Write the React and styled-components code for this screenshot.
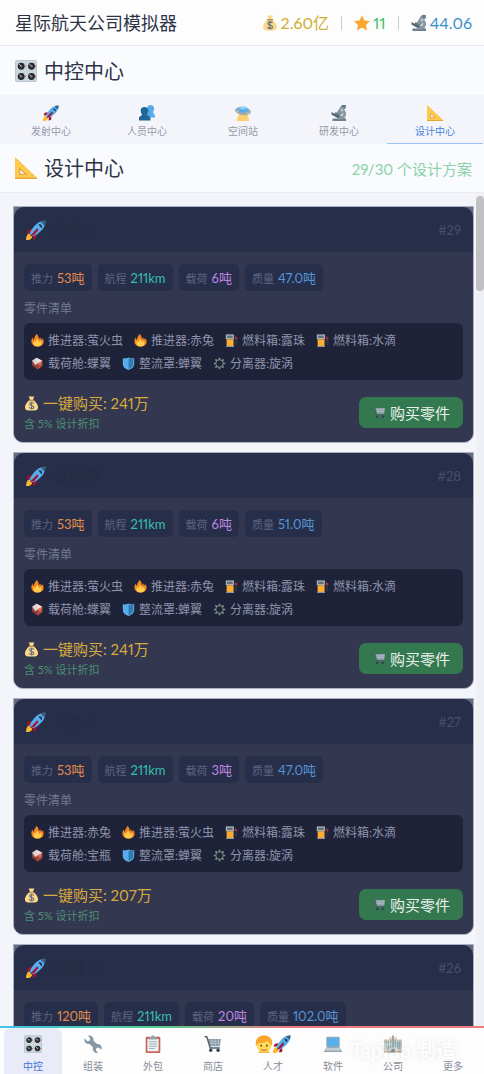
import React, { useState } from "react"
import styled, { createGlobalStyle } from "styled-components"


const GlobalStyle = createGlobalStyle`
  * {
    box-sizing: border-box;
  }
  body {
    margin: 0;
    background: #f4f5fa;
    color: #2e3445;
    font-family: Lato, "Noto Sans CJK SC", sans-serif;
    font-variant-numeric: proportional-nums;
  }
  h1, h2, h3, p, ul {
    margin: 0;
    padding: 0;
    font-weight: 400;
  }
  button {
    border: 0;
    margin: 0;
    padding: 0;
    background: none;
    font: inherit;
    cursor: pointer;
  }
`;

const Svg = styled.svg`
  display: block;
  flex: none;
  width: ${({ $size }) => $size}px;
  height: ${({ $size }) => $size}px;
`;

const drawings = {
  rocket: (
    <>
      <path d="M9 14 3 16 1 21l7-1zM17 24l-1 6-5 1 1-8z" fill="#a5122b" />
      <path d="M5 21c-4 2-5 7-5 11 4 0 8 0 10-5z" fill="#fdb62f" />
      <path d="M31 1c-8 0-13 3-18 9-4 5-6 8-7 12l4 4c4-1 8-3 12-7 6-5 9-10 9-18z" fill="#55acee" />
      <path d="M31 1c-3 0-6 .5-8 1.500l6.500 6.500C31 6 31 4 31 1z" fill="#3c5f83" />
      <path d="M20 7c4-1 7 2 5 6l-3-3z" fill="#20303f" />
      <path d="M18 13 6 26l7-2 7-8z" fill="#a5122b" />
    </>
  ),
  bag: (
    <>
      <path d="M10 1h12l-3 7c6 4 11 10 11 16 0 5-4 7-7 7H9c-4 0-7-2-7-7C2 18 7 12 13 8z" fill="#fdd888" />
      <path d="M10 8h12v3H10z" fill="#bf8f52" />
      <path d="M21 16c-2-3-9-3-9 1 0 5 9 2 9 7 0 4-8 4-10 0M16 12v17" fill="none" stroke="#67757f" strokeWidth="2.500" />
    </>
  ),
  star: <path d="m16 1 5 10 11 1-8 8 2 11-10-6-10 6 2-11-8-8 11-1z" fill="#fba62f" />,
  microscope: (
    <>
      <path d="M3 27h27v5H3zM18 22h9v6h-9z" fill="#71818d" />
      <path d="M24 8c9 5 8 16-1 20l-8 1v-5c8-1 12-6 6-11z" fill="#8998a4" />
      <path d="m20 2 8 5-8 14-9-5z" fill="#8495a1" />
      <path d="m22 0 8 0-1 8-9-5zM9 14l10 6-2 4-10-6z" fill="#687985" />
      <path d="m1 14 16 9-2 4-14-8z" fill="#50616d" />
      <circle cx="22" cy="10" r="3" fill="#b9c5cd" />
    </>
  ),
  knobs: (
    <>
      <rect width="32" height="32" rx="3" fill="#b5c1c8" />
      <rect x="1" y="1" width="30" height="30" rx="2" fill="#cbd6dc" />
      {[9, 24].map((x) => [9, 24].map((y) => (
        <g key={`${x}-${y}`}>
          <circle cx={x} cy={y} r="5" fill="#242a2e" />
          <circle cx={x} cy={y} r="2" fill="#59636a" />
          <path d={`M${x} ${y}l-3-3`} stroke="#dce4e8" strokeWidth="1.300" />
          <circle cx={x + 6} cy={y} r="1" fill="#dd4b58" />
        </g>
      )))}
    </>
  ),
  people: (
    <>
      <path d="M15 19c0-3 2-3 3-5-3-4-3-14 5-14s9 9 5 14c0 3 4 3 4 9v2H16z" fill="#55acee" />
      <path d="M0 31v-5c0-4 6-4 6-7-4-6-4-15 5-15s9 9 5 15c0 3 7 3 7 8v4z" fill="#226699" />
    </>
  ),
  ufo: (
    <>
      <path d="M8 16h16l5 16H3z" fill="#fdd06f" />
      <ellipse cx="16" cy="12" rx="16" ry="8" fill="#9aaab4" transform="rotate(8 16 12)" />
      <ellipse cx="16" cy="9" rx="10" ry="6" fill="#55acee" />
      <path d="M8 7c4-4 12-4 16 0-5 2-11 2-16 0z" fill="#9bd2fa" />
      <circle cx="5" cy="13" r="1.500" fill="#ffd983" />
      <circle cx="26" cy="16" r="1.500" fill="#ffd983" />
    </>
  ),
  ruler: (
    <>
      <path d="M0 0 32 30v2H0z" fill="#ffca4c" />
      <path d="M0 30h32v2H0z" fill="#e9a638" />
      <path d="M7 17v8h9z" fill="#fafbff" stroke="#d89b38" strokeWidth="1.500" />
      <path d="M4 4v2M8 8v2M12 12v2M20 20v2M25 25v2" stroke="#d59a35" />
    </>
  ),
  fire: (
    <>
      <path d="M16 31C7 31 1 26 1 18c0-4 1-7 3-10 0 4 1 6 3 6C7 7 13 5 12 0c6 2 7 7 7 12 2 0 3-2 3-4 2 1 2 4 2 6 2 0 3-2 3-4 3 3 4 6 4 9 0 7-6 12-15 12z" fill="#f4881f" />
      <path d="M16 31c-6 0-10-3-10-8 0-3 1-5 3-7 0 2 1 3 3 3 0-3 1-6 4-8 0 4 4 5 4 9 2 0 2-2 2-4 3 2 4 4 4 7 0 5-4 8-10 8z" fill="#ffcc4d" />
    </>
  ),
  fuel: (
    <>
      <path d="M2 1h20v12H2z" fill="#aab7bd" />
      <path d="M5 4h14v6H5z" fill="#617179" />
      <path d="M4 13h17v17H4z" fill="#ffac33" />
      <path d="M3 29h19v3H3z" fill="#8e9aa1" />
      <path d="M22 12h3v12c0 4 4 4 4 0V10l-6-5" fill="none" stroke="#343c4a" strokeWidth="2" />
      <path d="m25 5 6 5-3 4-4-4z" fill="#b82c3d" />
    </>
  ),
  cube: (
    <>
      <path d="m14 2 14 7v13L17 31 3 20V9z" fill="#b34a3c" />
      <path d="m14 2 14 7-12 7L3 9z" fill="#e9dfdf" />
      <path d="m3 9 13 7v15L3 20z" fill="#8f4038" />
      <path d="m3 9 11-7 2 14-5 4z" fill="#d9d2d6" />
      <path d="m16 16 12-7-5 12z" fill="#e4725d" />
    </>
  ),
  shield: (
    <>
      <path d="M16 1c4 2 9 3 14 2v14c0 7-6 12-14 15C8 29 2 24 2 17V3c5 1 10 0 14-2z" fill="#6fb2ea" />
      <path d="M16 3v27C9 27 4 23 4 17V5c4 0 8 0 12-2z" fill="#55acee" />
      <path d="M16 3c4 2 8 2 12 2v12c0 6-5 10-12 13z" fill="#2f7bb4" />
    </>
  ),
  gear: (
    <g fill="none" stroke="#7d8f86">
      <circle cx="16" cy="16" r="9" strokeWidth="2.500" />
      <path d="M16 2v5M16 25v5M2 16h5M25 16h5M6 6l4 4M22 22l4 4M6 26l4-4M22 10l4-4" strokeWidth="4" />
    </g>
  ),
  cart: (
    <>
      <path d="M7 7h23l-2 13H10z" fill="#899aa5" />
      <path d="M10 11h19M10 15h18M14 7l1 13M20 7v13M26 7l-1 13" stroke="#c4cfd5" />
      <path d="M1 3h4l6 20h17" fill="none" stroke="#50616b" strokeWidth="2.500" strokeLinejoin="round" />
      <circle cx="12" cy="27" r="3" fill="#34444d" />
      <circle cx="25" cy="27" r="3" fill="#34444d" />
    </>
  ),
  wrench: (
    <path d="M7 1c6-1 11 3 10 9l6 6c6-1 10 4 8 10l-5-4-4 1-1 4 4 5c-6 1-11-4-9-10l-6-6C4 17-1 12 1 6l5 5 4-1 1-4z" fill="#8798a4" />
  ),
  clipboard: (
    <>
      <rect x="3" y="3" width="26" height="29" rx="2" fill="#c76650" />
      <path d="M6 7h20v22H6z" fill="#edf1f4" />
      <path d="M9 12h14M9 16h14M9 20h14M9 24h10" stroke="#8fa6b5" strokeWidth="1.500" />
      <path d="M9 4h4c0-5 6-5 6 0h4v4H9z" fill="#97a5af" />
    </>
  ),
  face: (
    <>
      <path d="M7 27h18v5H7z" fill="#f6b638" />
      <ellipse cx="16" cy="18" rx="13" ry="13" fill="#ffdc5d" />
      <path d="M2 20C-1 7 7 1 16 1s17 6 14 19l-3-6c-3-1-4-2-5-4-4 4-11 4-16 4z" fill="#f9a62b" />
      <ellipse cx="11" cy="19" rx="1.500" ry="2" fill="#664500" />
      <ellipse cx="21" cy="19" rx="1.500" ry="2" fill="#664500" />
      <path d="M11 25c3 3 7 3 10 0" fill="none" stroke="#b7623c" strokeWidth="2" />
    </>
  ),
  laptop: (
    <>
      <rect x="4" y="3" width="24" height="20" rx="2" fill="#99a9b5" />
      <path d="M6 5h20v15H6z" fill="#58afe9" />
      <path d="M3 23h26l3 6H0z" fill="#c0ccd3" />
      <path d="M0 28h32v2H0z" fill="#8796a2" />
    </>
  ),
  office: (
    <>
      <path d="M0 8h32v23H0z" fill="#c8bfae" />
      <path d="M9 4h14v27H9z" fill="#ddd4c2" />
      <path d="M4 12v13M8 12v13M12 8v16M20 8v16M24 12v13M28 12v13" stroke="#68a6c9" strokeWidth="2" />
      <path d="M16 1v24" stroke="#a49a89" strokeWidth="3" />
      <path d="M13 25h6v6h-6z" fill="#557a91" />
      <path d="M0 29h32v2H0z" fill="#9b9280" />
    </>
  ),
}

function Emoji({ name, size = 16 }) {
  return <Svg $size={size} viewBox="0 0 32 32" aria-hidden="true">{drawings[name]}</Svg>
}


const Screen = styled.div`
  display: flex;
  flex-direction: column;
  height: 100vh;
`;

const TopBar = styled.header`
  display: flex;
  align-items: center;
  justify-content: space-between;
  height: 46px;
  padding: 0 12px 0 15px;
  background: #fdfdfe;
  border-bottom: 1px solid #e5e7ee;
`;

const AppName = styled.h1`
  font-size: 18px;
  line-height: 22px;
`;

const Stats = styled.div`
  display: flex;
  align-items: center;
  gap: 12px;
`;

const Stat = styled.span`
  display: flex;
  align-items: center;
  gap: 3px;
  font-size: 16px;
  line-height: 20px;
  color: ${({ $color }) => $color};
  & + & {
    padding-left: 13px;
    background: linear-gradient(#c9cbd3, #c9cbd3) left center / 1px 14px no-repeat;
  }
`;

const SectionBar = styled.div`
  display: flex;
  align-items: center;
  gap: 7px;
  height: ${({ $tall }) => ($tall ? 50 : 49)}px;
  padding: 0 12px 0 15px;
  background: #fafbff;
  border-bottom: 1px solid ${({ $tall }) => ($tall ? "#f4f5fa" : "#eaecf1")};
`;

const SectionTitle = styled.h2`
  flex: 1;
  font-size: 20px;
  line-height: 28px;
`;

const Quota = styled.span`
  font-size: 15px;
  color: #8bd2a9;
`;

const Tabs = styled.nav`
  display: flex;
  padding: 0 1px 0 3px;
  background: #f4f5fa;
`;

const Tab = styled.button`
  display: flex;
  flex: 1;
  flex-direction: column;
  align-items: center;
  gap: 2px;
  height: 48px;
  padding-top: 9px;
  font-size: 10px;
  line-height: 16px;
  color: ${({ $active }) => ($active ? "#3f7fe0" : "#9699a9")};
  border-bottom: 1px solid ${({ $active }) => ($active ? "#9cc4f7" : "transparent")};
`;

const ListArea = styled.main`
  display: flex;
  flex: 1;
  min-height: 0;
`;

const List = styled.div`
  flex: 1;
  display: flex;
  flex-direction: column;
  gap: 9px;
  padding: 13px 2px 13px 13px;
  overflow-y: auto;
  scrollbar-width: none;
`;

const Rail = styled.div`
  width: 8px;
  padding-top: 3px;
  background: #eff0f5;
`;

const Thumb = styled.div`
  height: 95px;
  border-radius: 4px;
  background: #c1c1c3;
`;

const Card = styled.article`
  flex: none;
  border: 1px solid #a9b1c2;
  border-radius: 0 0 10px 10px;
  background: #646b80;
`;

const CardHead = styled.header`
  display: flex;
  align-items: center;
  gap: 7px;
  height: 45px;
  padding: 0 12px;
  border-radius: 10px 10px 0 0;
  background: #272e4a;
`;

const CardName = styled.h3`
  flex: 1;
  font-size: 16px;
  font-weight: 700;
  line-height: 20px;
  color: #252c43;
`;

const CardNumber = styled.span`
  font-size: 13px;
  color: #484e67;
`;

const CardBody = styled.div`
  padding: 12px 10px 10px;
  border-radius: 0 0 9px 9px;
  background: #333750;
`;

const Chips = styled.div`
  display: flex;
  gap: 6px;
`;

const Chip = styled.span`
  display: flex;
  align-items: center;
  gap: 4px;
  height: 27px;
  padding: 0 7px;
  border-radius: 5px;
  background: #272e4a;
  font-size: 11px;
  color: #5d637d;
`;

const ChipValue = styled.span`
  font-size: 13px;
  color: ${({ $color }) => $color};
`;

const PartsLabel = styled.p`
  padding: 8px 0 4px;
  font-size: 12px;
  line-height: 20px;
  color: #747a91;
`;

const Parts = styled.ul`
  display: flex;
  flex-wrap: wrap;
  column-gap: 11px;
  padding: 6px 7px 5px;
  border-radius: 6px;
  background: #1e2339;
  list-style: none;
`;

const Part = styled.li`
  display: flex;
  align-items: center;
  gap: 4px;
  font-size: 12px;
  line-height: 23px;
  color: #8f93ab;
`;

const CardFoot = styled.div`
  display: flex;
  align-items: center;
  justify-content: space-between;
  padding-top: 12px;
`;

const Price = styled.p`
  display: flex;
  align-items: center;
  gap: 4px;
  font-size: 15px;
  line-height: 23px;
  color: #d9aa3f;
`;

const Discount = styled.p`
  font-size: 11px;
  line-height: 17px;
  color: #4d9170;
`;

const BuyButton = styled.button`
  display: flex;
  align-items: center;
  gap: 4px;
  height: 31px;
  padding: 0 13px;
  border-radius: 7px;
  background: #347850;
  font-size: 15px;
  color: #e9f2ec;
`;

const BottomNav = styled.nav`
  position: relative;
  display: flex;
  gap: 2px;
  padding: 0 2px 0 4px;
  background:
    linear-gradient(90deg, #40c4e4, #58cb8c 34%, #ee7b80 60%) top / 100% 2px no-repeat,
    #fdfdfe;
`;

const NavItem = styled.button`
  display: flex;
  flex: 1;
  flex-direction: column;
  align-items: center;
  gap: 5px;
  height: 46px;
  margin-top: 2px;
  padding-top: 7px;
  border-radius: 7px 7px 0 0;
  background: ${({ $active }) => ($active ? "#e9ecf8" : "none")};
  font-size: 10px;
  line-height: 16px;
  color: ${({ $active }) => ($active ? "#4472d6" : "#898c98")};
`;

const NavIcons = styled.span`
  display: flex;
  height: 18px;
`;

const Watermark = styled.span`
  position: absolute;
  right: 28px;
  top: 10px;
  font-size: 20px;
  font-weight: 700;
  line-height: 28px;
  color: #fff;
  opacity: 0.3;
  text-shadow: 0 0 4px #b9b9b9;
  pointer-events: none;
`;


const tabs = [
  ["rocket", "发射中心"],
  ["people", "人员中心"],
  ["ufo", "空间站"],
  ["microscope", "研发中心"],
  ["ruler", "设计中心"],
]

const navItems = [
  [["knobs"], "中控"],
  [["wrench"], "组装"],
  [["clipboard"], "外包"],
  [["cart"], "商店"],
  [["face", "rocket"], "人才"],
  [["laptop"], "软件"],
  [["office"], "公司"],
  [[], "更多"],
]

const partIcons = {
  推进器: "fire",
  燃料箱: "fuel",
  载荷舱: "cube",
  整流罩: "shield",
  分离器: "gear",
}

const designs = [
  {
    id: 29, name: "猎鹰A", thrust: "53吨", load: "6吨", mass: "47.0吨", price: "241万",
    parts: ["推进器:萤火虫", "推进器:赤兔", "燃料箱:露珠", "燃料箱:水滴", "载荷舱:蝶翼", "整流罩:蝉翼", "分离器:旋涡"],
  },
  {
    id: 28, name: "星际甲", thrust: "53吨", load: "6吨", mass: "51.0吨", price: "241万",
    parts: ["推进器:萤火虫", "推进器:赤兔", "燃料箱:露珠", "燃料箱:水滴", "载荷舱:蝶翼", "整流罩:蝉翼", "分离器:旋涡"],
  },
  {
    id: 27, name: "玉兔-I", thrust: "53吨", load: "3吨", mass: "47.0吨", price: "207万",
    parts: ["推进器:赤兔", "推进器:萤火虫", "燃料箱:露珠", "燃料箱:水滴", "载荷舱:宝瓶", "整流罩:蝉翼", "分离器:旋涡"],
  },
  {
    id: 26, name: "嫦娥-X", thrust: "120吨", load: "20吨", mass: "102.0吨", price: "241万",
    parts: ["推进器:萤火虫", "推进器:赤兔", "燃料箱:露珠", "燃料箱:水滴", "载荷舱:蝶翼", "整流罩:蝉翼", "分离器:旋涡"],
  },
]

function DesignCard({ design }) {
  return (
    <Card>
      <CardHead>
        <Emoji name="rocket" size={20} />
        <CardName>{design.name}</CardName>
        <CardNumber>#{design.id}</CardNumber>
      </CardHead>
      <CardBody>
        <Chips>
          <Chip>推力<ChipValue $color="#e58a4b">{design.thrust}</ChipValue></Chip>
          <Chip>航程<ChipValue $color="#37bfae">211km</ChipValue></Chip>
          <Chip>载荷<ChipValue $color="#bd86e0">{design.load}</ChipValue></Chip>
          <Chip>质量<ChipValue $color="#5594d4">{design.mass}</ChipValue></Chip>
        </Chips>
        <PartsLabel>零件清单</PartsLabel>
        <Parts>
          {design.parts.map((part) => (
            <Part key={part}>
              <Emoji name={partIcons[part.split(":")[0]]} size={13} />
              {part}
            </Part>
          ))}
        </Parts>
        <CardFoot>
          <div>
            <Price><Emoji name="bag" size={15} />一键购买: {design.price}</Price>
            <Discount>含 5% 设计折扣</Discount>
          </div>
          <BuyButton type="button"><Emoji name="cart" size={14} />购买零件</BuyButton>
        </CardFoot>
      </CardBody>
    </Card>
  )
}

export default function App() {
  const [tab, setTab] = useState("设计中心")
  const [page, setPage] = useState("中控")

  return (
    <Screen>
      <GlobalStyle />
      <TopBar>
        <AppName>星际航天公司模拟器</AppName>
        <Stats>
          <Stat $color="#cfae2e"><Emoji name="bag" />2.60亿</Stat>
          <Stat $color="#45bd6c"><Emoji name="star" />11</Stat>
          <Stat $color="#3791cb"><Emoji name="microscope" />44.06</Stat>
        </Stats>
      </TopBar>

      <SectionBar $tall>
        <Emoji name="knobs" size={22} />
        <SectionTitle>中控中心</SectionTitle>
      </SectionBar>

      <Tabs>
        {tabs.map(([icon, label]) => (
          <Tab key={label} type="button" $active={label === tab} onClick={() => setTab(label)}>
            <Emoji name={icon} />
            {label}
          </Tab>
        ))}
      </Tabs>

      <SectionBar>
        <Emoji name="ruler" size={22} />
        <SectionTitle>设计中心</SectionTitle>
        <Quota>29/30 个设计方案</Quota>
      </SectionBar>

      <ListArea>
        <List>
          {designs.map((design) => <DesignCard key={design.id} design={design} />)}
        </List>
        <Rail><Thumb /></Rail>
      </ListArea>

      <BottomNav>
        {navItems.map(([icons, label]) => (
          <NavItem key={label} type="button" $active={label === page} onClick={() => setPage(label)}>
            <NavIcons>
              {icons.map((icon) => <Emoji key={icon} name={icon} size={18} />)}
            </NavIcons>
            {label}
          </NavItem>
        ))}
        <Watermark>TapTap 制造</Watermark>
      </BottomNav>
    </Screen>
  )
}
